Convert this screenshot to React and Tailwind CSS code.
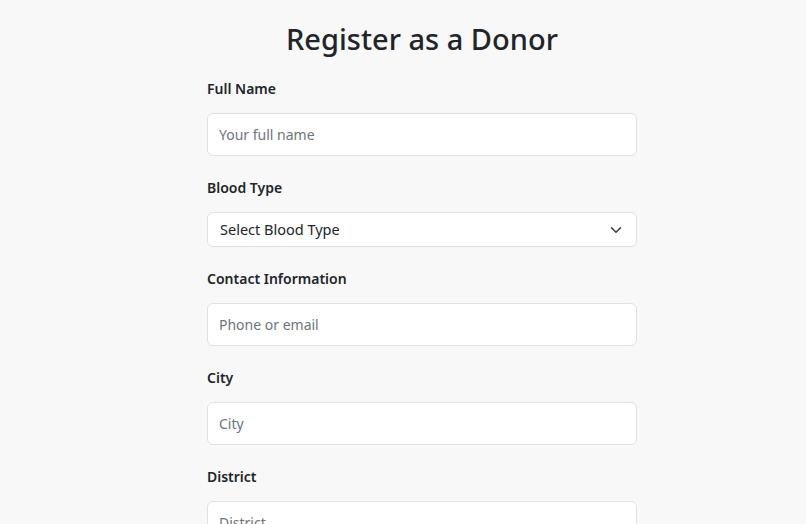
import React from "react";

function Field({ label, placeholder }) {
  return (
    <div className="flex flex-col">
      <label className="h-[21px] leading-[21px] text-[14px] font-semibold text-[#212529] mb-[14px]">{label}</label>
      <input
        placeholder={placeholder}
        className="h-[43px] w-full rounded-[6px] border border-[#dee2e6] bg-white px-[11px] text-[14px] text-[#212529] placeholder:text-[#6c757d] outline-none"
      />
    </div>
  );
}

export default function App() {
  return (
    <div
      className="min-h-[524px] w-full bg-[#f8f8f8]"
      style={{ fontFamily: '"Noto Sans", "Open Sans", sans-serif' }}
    >
      <div className="ml-[207px] w-[430px] pt-[19px]">
        <h2 className="text-center text-[29px] font-medium leading-[40px] text-[#212529] mb-[19px]">Register as a Donor</h2>
        <div className="flex flex-col gap-[21px]">
          <Field label="Full Name" placeholder="Your full name" />
          <div className="flex flex-col">
            <label className="h-[21px] leading-[21px] text-[14px] font-semibold text-[#212529] mb-[14px]">Blood Type</label>
            <div className="relative h-[35px] w-full rounded-[6px] border border-[#dee2e6] bg-white flex items-center px-[12px]">
              <span className="text-[14.5px] text-[#212529]">Select Blood Type</span>
              <svg className="absolute right-[14px] top-1/2 -translate-y-1/2" width="12" height="8" viewBox="0 0 16 10" fill="none">
                <path d="M2 2l6 6 6-6" stroke="#343a40" strokeWidth="2" strokeLinecap="round" strokeLinejoin="round" />
              </svg>
            </div>
          </div>
          <Field label="Contact Information" placeholder="Phone or email" />
          <Field label="City" placeholder="City" />
          <Field label="District" placeholder="District" />
        </div>
      </div>
    </div>
  );
}
